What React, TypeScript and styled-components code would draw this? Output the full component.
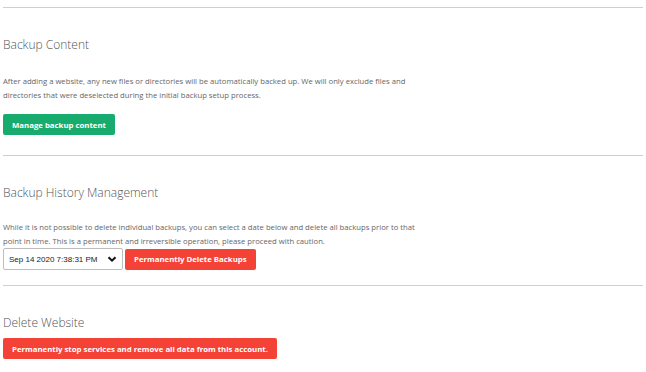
import styled, { createGlobalStyle } from "styled-components"

const Global = createGlobalStyle`
body{
    margin: 0;
    background: #fff;
    font-family: "Open Sans", "Liberation Sans", sans-serif;
}
`

const App = () => {
    return (
        <Page>
            <Global />
            <Section bottom={20}>
                <Title>Backup Content</Title>
                <Text>
                    After adding a website, any new files or directories will be automatically backed up. We will only exclude files and
                    <br />
                    directories that were deselected during the initial backup setup process.
                </Text>
                <Button tone="green">Manage backup content</Button>
            </Section>
            <Section bottom={15}>
                <Title>Backup History Management</Title>
                <Text tight>
                    While it is not possible to delete individual backups, you can select a date below and delete all backups prior to that
                    <br />
                    point in time. This is a permanent and irreversible operation, please proceed with caution.
                </Text>
                <Row>
                    <SelectBox>
                        <SelectText>Sep 14 2020 7:38:31 PM</SelectText>
                        <Chevron viewBox="0 0 10 10">
                            <path d="M1.5 3.2 L5 6.7 L8.5 3.2" fill="none" stroke="#111" strokeWidth="2" />
                        </Chevron>
                    </SelectBox>
                    <Button tone="red">Permanently Delete Backups</Button>
                </Row>
            </Section>
            <Section bottom={8}>
                <Title spaced>Delete Website</Title>
                <Button tone="red">Permanently stop services and remove all data from this account.</Button>
            </Section>
        </Page>
    )
}

export default App

const Page = styled.div`
width: 646px;
padding-top: 7px;
`
const Section = styled.div<{ bottom: number }>`
margin: 0 3px;
border-top: 1px solid #cfcfcf;
padding-top: 28px;
padding-bottom: ${p => p.bottom}px;
display: flex;
flex-direction: column;
align-items: flex-start;
`
const Title = styled.div<{ spaced?: boolean }>`
font-size: 12px;
font-weight: 300;
color: #555;
line-height: 18px;
margin-bottom: ${p => (p.spaced ? "6px" : "0")};
`
const Text = styled.div<{ tight?: boolean }>`
margin-top: ${p => (p.tight ? "18px" : "20px")};
margin-bottom: ${p => (p.tight ? "0" : "12px")};
font-size: 7.7px;
color: #666;
line-height: 14px;
`
const Button = styled.div<{ tone: "green" | "red" }>`
height: 21px;
padding: 0 9px;
display: flex;
align-items: center;
border-radius: 2px;
font-size: 7.8px;
font-weight: 700;
color: #fff;
background-color: ${p => (p.tone === "green" ? "#17ab6d" : "#f44237")};
`
const Row = styled.div`
display: flex;
align-items: center;
gap: 2px;
`
const SelectBox = styled.div`
width: 108px;
height: 20px;
border: 1px solid #bdbdbd;
border-radius: 2px;
display: flex;
align-items: center;
justify-content: space-between;
padding: 0 5px 0 5px;
box-sizing: content-box;
`
const SelectText = styled.span`
font-family: "Liberation Sans", Arial, sans-serif;
font-size: 8px;
color: #222;
`
const Chevron = styled.svg`
width: 10px;
height: 10px;
`
